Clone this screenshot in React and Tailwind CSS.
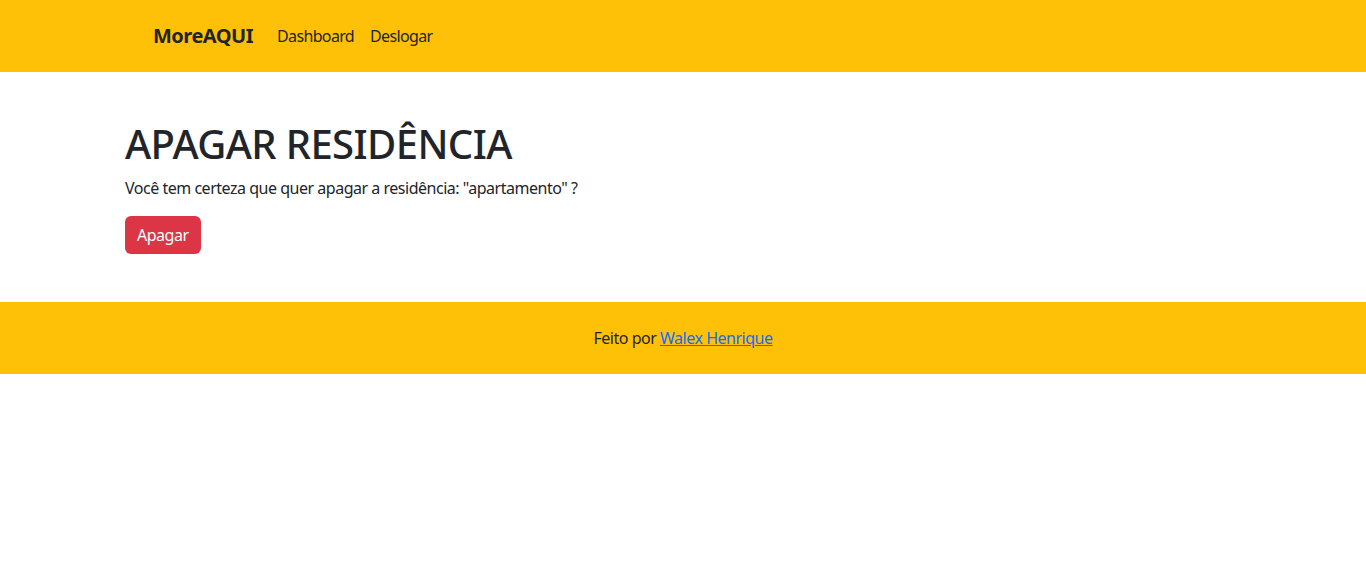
export default function App() {
  const font = { fontFamily: '"Noto Sans", "Open Sans", sans-serif' };
  return (
    <div className="min-h-[568px] bg-white text-[#212529] tracking-[-0.03em]" style={font}>
      <nav className="bg-[#ffc107] h-[72px] flex items-center">
        <div className="w-[1140px] mx-auto px-3 flex items-center">
          <a className="ml-[28px] mr-4 text-[20px] font-bold text-[#212529] tracking-[-0.025em]" href="#">MoreAQUI</a>
          <a className="px-2 text-[16px] text-[#212529] tracking-[-0.04em]" href="#">Dashboard</a>
          <a className="px-2 text-[16px] text-[#212529] tracking-[-0.04em]" href="#">Deslogar</a>
        </div>
      </nav>
      <main className="py-12">
        <div className="w-[1140px] mx-auto px-3">
          <h1 className="text-[40px] leading-[48px] font-medium mb-2 tracking-[-0.015em]">APAGAR RESIDÊNCIA</h1>
          <p className="text-[16px] leading-6 mb-4">Você tem certeza que quer apagar a residência: "apartamento" ?</p>
          <button className="bg-[#dc3545] text-white text-[16px] leading-6 px-3 py-[7px] rounded-md">Apagar</button>
        </div>
      </main>
      <footer className="bg-[#ffc107] h-[72px] flex items-center justify-center text-[16px]">
        <span>Feito por <a className="text-[#0d6efd] underline" href="#">Walex Henrique</a></span>
      </footer>
    </div>
  );
}
